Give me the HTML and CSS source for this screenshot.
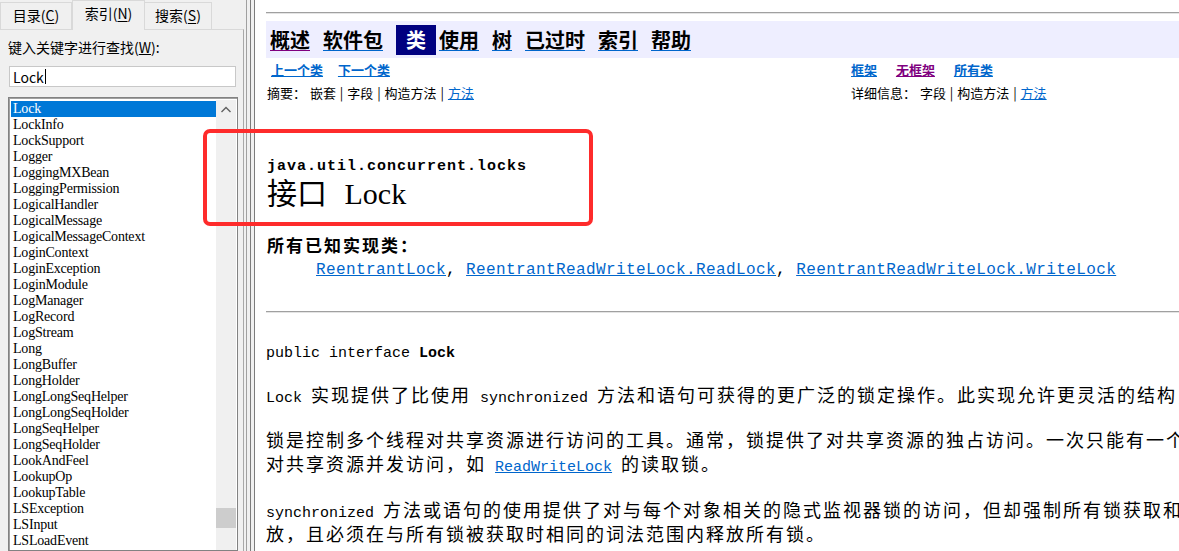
FILE: index.html
```html
<!DOCTYPE html>
<html lang="zh-CN">
<head>
  <meta charset="UTF-8" />
  <title>Lock</title>
  <link rel="stylesheet" href="styles.css">
</head>
<body>
  <div class="window">
    <div class="sidebar">
      <div class="tabs">
        <div class="tab">目录(<u>C</u>)</div>
        <div class="tab active">索引(<u>N</u>)</div>
        <div class="tab">搜索(<u>S</u>)</div>
      </div>

      <div class="tab-page">
        <div class="field-label">键入关键字进行查找(<u>W</u>):</div>
        <div class="search-box">Lock<span class="caret"></span></div>

        <div class="listbox">
          <ul class="items">
            <li class="selected">Lock</li>
            <li>LockInfo</li>
            <li>LockSupport</li>
            <li>Logger</li>
            <li>LoggingMXBean</li>
            <li>LoggingPermission</li>
            <li>LogicalHandler</li>
            <li>LogicalMessage</li>
            <li>LogicalMessageContext</li>
            <li>LoginContext</li>
            <li>LoginException</li>
            <li>LoginModule</li>
            <li>LogManager</li>
            <li>LogRecord</li>
            <li>LogStream</li>
            <li>Long</li>
            <li>LongBuffer</li>
            <li>LongHolder</li>
            <li>LongLongSeqHelper</li>
            <li>LongLongSeqHolder</li>
            <li>LongSeqHelper</li>
            <li>LongSeqHolder</li>
            <li>LookAndFeel</li>
            <li>LookupOp</li>
            <li>LookupTable</li>
            <li>LSException</li>
            <li>LSInput</li>
            <li>LSLoadEvent</li>
          </ul>
          <div class="scrollbar">
            <svg class="arrow-up" width="20" height="20" viewBox="0 0 20 20">
              <path d="M5.5 12 L10 7.5 L14.5 12" fill="none" stroke="#606060" stroke-width="1.4" />
            </svg>
            <div class="thumb"></div>
          </div>
        </div>
      </div>
    </div>

    <div class="splitter"></div>

    <div class="content">
      <div class="page">
        <div class="rule top"></div>

        <div class="navbar">
          <a class="nav-link visited" href="#">概述</a>
          <a class="nav-link" href="#">软件包</a>
          <span class="nav-current">类</span>
          <a class="nav-link" href="#">使用</a>
          <a class="nav-link" href="#">树</a>
          <a class="nav-link" href="#">已过时</a>
          <a class="nav-link" href="#">索引</a>
          <a class="nav-link" href="#">帮助</a>
        </div>

        <div class="subnav">
          <div class="sub-left first">
            <a class="sub-link" href="#">上一个类</a>
            <a class="sub-link" href="#">下一个类</a>
          </div>
          <div class="sub-right">
            <a class="sub-link" href="#">框架</a>
            <a class="sub-link visited" href="#">无框架</a>
            <a class="sub-link" href="#">所有类</a>
          </div>
        </div>
        <div class="subnav small">
          <div class="sub-left">摘要：&nbsp;嵌套 | 字段 | 构造方法 | <a href="#">方法</a></div>
          <div class="sub-right">详细信息：&nbsp;字段 | 构造方法 | <a href="#">方法</a></div>
        </div>

        <div class="pkg">java.util.concurrent.locks</div>
        <h2 class="title">接口 Lock</h2>

        <div class="known">所有已知实现类：</div>
        <div class="impl">
          <a href="#">ReentrantLock</a>, <a href="#">ReentrantReadWriteLock.ReadLock</a>, <a href="#">ReentrantReadWriteLock.WriteLock</a>
        </div>

        <div class="rule mid"></div>

        <div class="sig">public interface <b>Lock</b></div>

        <p class="text first"><code>Lock </code>实现提供了比使用<code> synchronized </code>方法和语句可获得的更广泛的锁定操作。此实现允许更灵活的结构，可以具有差别很大的属性，可以支持多个相关的<code> Condition </code>对象。</p>

        <p class="text">锁是控制多个线程对共享资源进行访问的工具。通常，锁提供了对共享资源的独占访问。一次只能有一个线程获得锁，对共享资源的所有访问都需要首先获得锁。不过，某些锁可能允许<br>对共享资源并发访问，如<code> <a href="#">ReadWriteLock</a> </code>的读取锁。</p>

        <p class="text last"><code>synchronized </code>方法或语句的使用提供了对与每个对象相关的隐式监视器锁的访问，但却强制所有锁获取和释<br>放，且必须在与所有锁被获取时相同的词法范围内释放所有锁。</p>
      </div>
    </div>
  </div>

  <div class="highlight"></div>
</body>
</html>
```

FILE: styles.css
```css
* { box-sizing: border-box; }
body {
  margin: 0;
  font-family: "Noto Sans CJK SC", sans-serif;
  background: #fff;
  overflow: hidden;
}
.window {
  display: flex;
  height: 551px;
}

/* left index panel */
.sidebar {
  width: 244px;
  flex-shrink: 0;
  display: flex;
  flex-direction: column;
  background: #f0f0f0;
}
.tabs {
  display: flex;
  align-items: flex-end;
  height: 29px;
}
.tab {
  height: 27px;
  border: 1px solid #d9d9d9;
  border-bottom: none;
  border-left: none;
  font-size: 14px;
  line-height: 25px;
  text-align: center;
  color: #000;
  background: #f0f0f0;
}
.tab:nth-child(1) { width: 72px; border-left: 1px solid #d9d9d9; }
.tab:nth-child(2) { width: 73px; }
.tab:nth-child(3) { width: 67px; }
.tab.active {
  position: relative;
  height: 30px;
  margin-bottom: -1px;
  line-height: 25px;
  border-left: 1px solid #d9d9d9;
  background: #f0f0f0;
}
.tab u { text-underline-offset: 2px; }
.tab-page {
  flex: 1;
  display: flex;
  flex-direction: column;
  min-height: 0;
  padding-top: 8px;
  border-top: 1px solid #d9d9d9;
  border-right: 1px solid #a8a8a8;
  background: #f0f0f0;
}
.field-label {
  padding-left: 8px;
  font-size: 14px;
  line-height: 18px;
}
.search-box {
  display: flex;
  align-items: center;
  width: 227px;
  height: 21px;
  margin: 10px 0 0 9px;
  padding-left: 3px;
  background: #fff;
  border: 1px solid #c8c8c8;
  font-size: 14px;
}
.caret {
  width: 1px;
  height: 15px;
  margin-left: 1px;
  background: #000;
}
.listbox {
  flex: 1;
  display: flex;
  width: 230px;
  min-height: 0;
  margin: 10px 0 0 8px;
  padding: 2px 1px 0 2px;
  background: #fff;
  border: 1px solid #828282;
  box-shadow: inset 1px 1px 0 #a0a0a0;
  overflow: hidden;
}
.items {
  flex: 1;
  margin: 1px 0 0;
  padding: 0;
  list-style: none;
}
.items li {
  height: 16px;
  padding-left: 2px;
  font-family: "Liberation Serif", serif;
  font-size: 14px;
  letter-spacing: -0.2px;
  line-height: 16px;
  white-space: nowrap;
}
.items li.selected {
  background: #0078d7;
  color: #fff;
}
.scrollbar {
  width: 20px;
  display: flex;
  flex-direction: column;
  background: #f0f0f0;
}
.arrow-up { display: block; }
.thumb {
  height: 20px;
  margin-top: 388px;
  background: #cdcdcd;
}

.splitter {
  width: 12px;
  flex-shrink: 0;
  background: linear-gradient(to right,
    #f0f0f0 0 2px, #a0a0a0 2px 3px, #f0f0f0 3px 6px,
    #7c7c7c 6px 7px, #f0f0f0 7px 10px, #7c7c7c 10px 11px, #fff 11px);
}

/* javadoc page */
.content {
  flex: 1;
  min-width: 0;
  overflow: hidden;
  padding-left: 10px;
}
.page { width: 1400px; }
.rule {
  height: 2px;
  border-top: 1px solid #a0a0a0;
  border-bottom: 1px solid #e4e4e4;
}
.rule.top { margin-top: 12px; }
.navbar {
  display: flex;
  align-items: center;
  height: 37px;
  margin-top: 7px;
  padding-left: 4px;
  background: #eeeeff;
}
.nav-link {
  margin-right: 13px;
  font-size: 20px;
  font-weight: bold;
  line-height: 30px;
  color: #000;
  text-decoration: underline;
  text-decoration-color: #0066cc;
  text-decoration-thickness: 1px;
  text-underline-offset: 2px;
}
.nav-link.visited { text-decoration-color: #800080; }
.nav-current {
  height: 30px;
  margin-right: 3px;
  padding: 0 10px;
  background: #000080;
  color: #fff;
  font-size: 20px;
  font-weight: bold;
  line-height: 30px;
}
.subnav {
  display: flex;
  margin-top: 2px;
  font-size: 13px;
  line-height: 20px;
  white-space: nowrap;
}
.subnav.small { margin-top: 3px; word-spacing: 1px; }
.sub-left { width: 585px; padding-left: 1px; }
.sub-left.first { padding-left: 5px; }
.sub-link {
  margin-right: 12px;
  font-weight: bold;
  color: #0066cc;
}
.sub-right .sub-link { margin-right: 16px; }
.subnav a { color: #0066cc; }
.subnav .sub-link.visited { color: #800080; }
.pkg {
  margin-top: 54px;
  padding-left: 1px;
  font-family: "Liberation Mono", monospace;
  font-size: 15px;
  font-weight: bold;
  letter-spacing: 1px;
  line-height: 20px;
}
.title {
  margin: 0;
  padding-left: 1px;
  font-family: "Liberation Serif", "Noto Sans CJK SC", serif;
  font-size: 30px;
  font-weight: normal;
  line-height: 34px;
  word-spacing: 10px;
}
.known {
  margin-top: 23px;
  padding-left: 1px;
  font-size: 17px;
  font-weight: bold;
  letter-spacing: 2px;
  line-height: 22px;
}
.impl {
  margin-top: 3px;
  padding-left: 50px;
  font-family: "Liberation Mono", monospace;
  font-size: 16px;
  letter-spacing: 0.4px;
  line-height: 22px;
  white-space: nowrap;
}
.impl a, .text a { color: #0066cc; }
.rule.mid { margin-top: 30px; }
.sig {
  margin-top: 31px;
  font-family: "Liberation Mono", monospace;
  font-size: 15px;
  line-height: 20px;
}
.text {
  margin: 21px 0 0;
  font-size: 18px;
  letter-spacing: 2px;
  line-height: 24px;
  white-space: nowrap;
}
.text.first { margin-top: 18px; }
.text.last { margin-top: 22px; }
.text code {
  font-family: "Liberation Mono", monospace;
  font-size: 15px;
  letter-spacing: 0;
  line-height: 1;
  white-space: pre;
}

/* annotation drawn over the screenshot */
.highlight {
  position: absolute;
  left: 203px;
  top: 129px;
  width: 390px;
  height: 97px;
  border: 4px solid #fe2b2b;
  border-radius: 7px;
}
```
